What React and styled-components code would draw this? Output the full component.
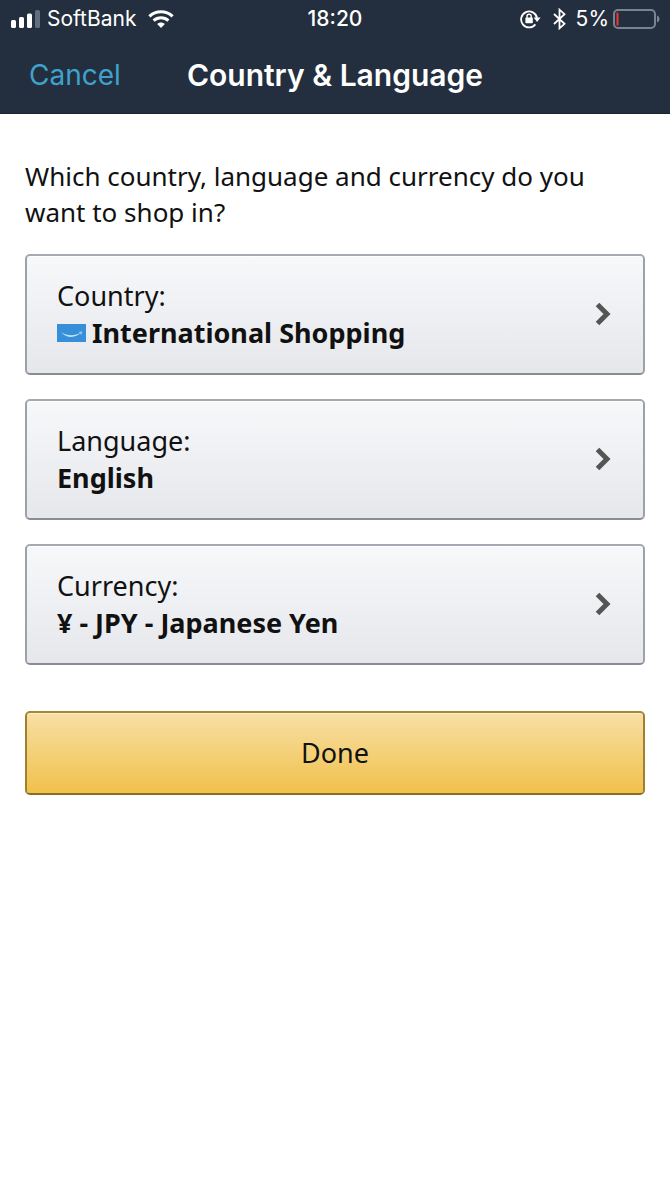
import React from "react";
import styled, { createGlobalStyle } from "styled-components";

const GlobalStyle = createGlobalStyle`
  * {
    box-sizing: border-box;
  }

  body {
    margin: 0;
    background-color: #fff;
    color: #111;
    font-family: "Noto Sans", sans-serif;
  }
`;

const Header = styled.header`
  background-color: #232f3e;
  border-bottom: 1px solid #1a2330;
  color: #fff;
  font-family: "Inter", sans-serif;
`;

const StatusBar = styled.div`
  display: grid;
  grid-template-columns: 1fr auto 1fr;
  align-items: center;
  height: 37px;
  padding: 0 10px;
  font-size: 21px;
  line-height: 24px;
`;

const StatusGroup = styled.div`
  display: flex;
  align-items: center;
  justify-content: ${(props) => (props.$end ? "flex-end" : "flex-start")};
  gap: ${(props) => (props.$end ? "4px" : "7px")};
`;

const Carrier = styled.span`
  margin-right: 5px;
`;

const Time = styled.time`
  font-weight: 500;
`;

const Indicators = styled.div`
  display: flex;
  align-items: center;
  gap: 12px;
  margin-right: 6px;
`;

const NavBar = styled.nav`
  display: grid;
  grid-template-columns: 1fr auto 1fr;
  align-items: center;
  height: 76px;
  padding: 0 29px;
`;

const CancelButton = styled.button`
  justify-self: start;
  padding: 0;
  border: 0;
  background: none;
  color: #3fa2cc;
  font-family: inherit;
  font-size: 28px;
  line-height: 36px;
  cursor: pointer;
`;

const Title = styled.h1`
  margin: 0;
  font-size: 30px;
  font-weight: 600;
  line-height: 36px;
`;

const Content = styled.main`
  padding: 44px 25px;
`;

const Question = styled.p`
  margin: 0 0 24px;
  font-size: 26px;
  line-height: 36px;
`;

const Options = styled.div`
  display: flex;
  flex-direction: column;
  gap: 24px;
`;

const OptionButton = styled.button`
  display: flex;
  align-items: center;
  justify-content: space-between;
  width: 100%;
  padding: 21px 32px 22px 30px;
  border: 2px solid;
  border-color: #a5a9b2 #9da1aa #888c94;
  border-radius: 5px;
  background: linear-gradient(#f7f8fa, #e5e7eb);
  background-clip: padding-box;
  box-shadow: inset 0 1px 0 #fff;
  color: #111;
  font-family: inherit;
  font-size: 27px;
  line-height: 37px;
  text-align: left;
  cursor: pointer;
`;

const OptionText = styled.span`
  display: flex;
  flex-direction: column;
`;

const OptionValue = styled.strong`
  display: flex;
  align-items: center;
  gap: 6px;
  font-weight: 700;
`;

const DoneButton = styled.button`
  width: 100%;
  margin-top: 46px;
  padding: 22px 30px;
  border: 2px solid;
  border-color: #a88734 #a0802f #8a6d24;
  border-radius: 5px;
  background: linear-gradient(#f7dfa5, #f0c14b);
  background-clip: padding-box;
  box-shadow: inset 0 1px 0 #fbefd0;
  color: #111;
  font-family: inherit;
  font-size: 27px;
  line-height: 36px;
  cursor: pointer;
`;

function SignalIcon() {
  return (
    <svg width="30" height="18" viewBox="0 0 30 18" fill="#fff" aria-hidden="true">
      <rect x="1" y="10" width="5" height="8" rx="1.5" />
      <rect x="9" y="7" width="5" height="11" rx="1.5" />
      <rect x="17" y="3.5" width="5" height="14.5" rx="1.5" />
      <rect x="25" y="0" width="5" height="18" rx="1.5" fill="#646d79" />
    </svg>
  );
}

function WifiIcon() {
  return (
    <svg width="26" height="18" viewBox="0 0 26 18" fill="none" aria-hidden="true">
      <path d="M1.4 6.4C8 .2 18 .2 24.6 6.4" stroke="#fff" strokeWidth="3.2" />
      <path d="M5.6 10.7c4.2-3.9 10.6-3.9 14.8 0" stroke="#fff" strokeWidth="3" />
      <path d="M13 18l-3.8-4c2.2-2 5.4-2 7.6 0z" fill="#fff" />
    </svg>
  );
}

function RotationLockIcon() {
  return (
    <svg width="21" height="20" viewBox="0 0 21 20" fill="none" aria-hidden="true">
      <path d="M15.4 15.4A8 8 0 1 1 17 9" stroke="#fff" strokeWidth="1.8" />
      <path d="M13.6 8.4h7L17.1 13z" fill="#fff" />
      <rect x="5.4" y="8.6" width="7.4" height="5.6" rx="0.8" fill="#fff" />
      <path d="M7 9V7.4a2.1 2.1 0 0 1 4.2 0V9" stroke="#fff" strokeWidth="1.4" />
    </svg>
  );
}

function BluetoothIcon() {
  return (
    <svg width="13" height="22" viewBox="0 0 13 22" fill="none" aria-hidden="true">
      <path
        d="M1 6l10.5 9.8L6.5 20.3V1.7l5 4.5L1 16"
        stroke="#fff"
        strokeWidth="1.8"
      />
    </svg>
  );
}

function BatteryIcon() {
  return (
    <svg width="47" height="20" viewBox="0 0 47 20" aria-hidden="true">
      <rect x="1" y="1" width="41" height="18" rx="4" fill="none" stroke="#7b838d" strokeWidth="2" />
      <rect x="3.5" y="3.5" width="2" height="13" rx="0.6" fill="#f0382f" />
      <path d="M44 6.5c3.4 1.3 3.4 5.7 0 7z" fill="#7b838d" />
    </svg>
  );
}

function FlagIcon() {
  return (
    <svg width="29" height="18" viewBox="0 0 29 18" fill="none" aria-hidden="true">
      <rect width="29" height="18" fill="#368fd8" />
      <path d="M4 8c6 4.2 14 4.2 20 .6-5.500 5.900-14.500 5.900-20-.6z" fill="#c3e3f9" />
      <path d="M21.500 8l3.700-.7-.6 3.700z" fill="#94c8ef" />
    </svg>
  );
}

function ChevronIcon() {
  return (
    <svg width="16" height="24" viewBox="0 0 16 24" fill="none" aria-hidden="true">
      <path d="M2.500 2.500L12 12L2.500 21.500" stroke="#555" strokeWidth="5" />
    </svg>
  );
}

function Option({ label, value, icon }) {
  return (
    <OptionButton type="button">
      <OptionText>
        <span>{label}:</span>
        <OptionValue>
          {icon}
          {value}
        </OptionValue>
      </OptionText>
      <ChevronIcon />
    </OptionButton>
  );
}

function App() {
  return (
    <>
      <GlobalStyle />
      <Header>
        <StatusBar>
          <StatusGroup>
            <SignalIcon />
            <Carrier>SoftBank</Carrier>
            <WifiIcon />
          </StatusGroup>
          <Time>18:20</Time>
          <StatusGroup $end>
            <Indicators>
              <RotationLockIcon />
              <BluetoothIcon />
            </Indicators>
            <span>5%</span>
            <BatteryIcon />
          </StatusGroup>
        </StatusBar>
        <NavBar>
          <CancelButton type="button">Cancel</CancelButton>
          <Title>Country &amp; Language</Title>
        </NavBar>
      </Header>
      <Content>
        <Question>
          Which country, language and currency do you want to shop in?
        </Question>
        <Options>
          <Option
            label="Country"
            value="International Shopping"
            icon={<FlagIcon />}
          />
          <Option label="Language" value="English" />
          <Option label="Currency" value="¥ - JPY - Japanese Yen" />
        </Options>
        <DoneButton type="button">Done</DoneButton>
      </Content>
    </>
  );
}

export default App;
